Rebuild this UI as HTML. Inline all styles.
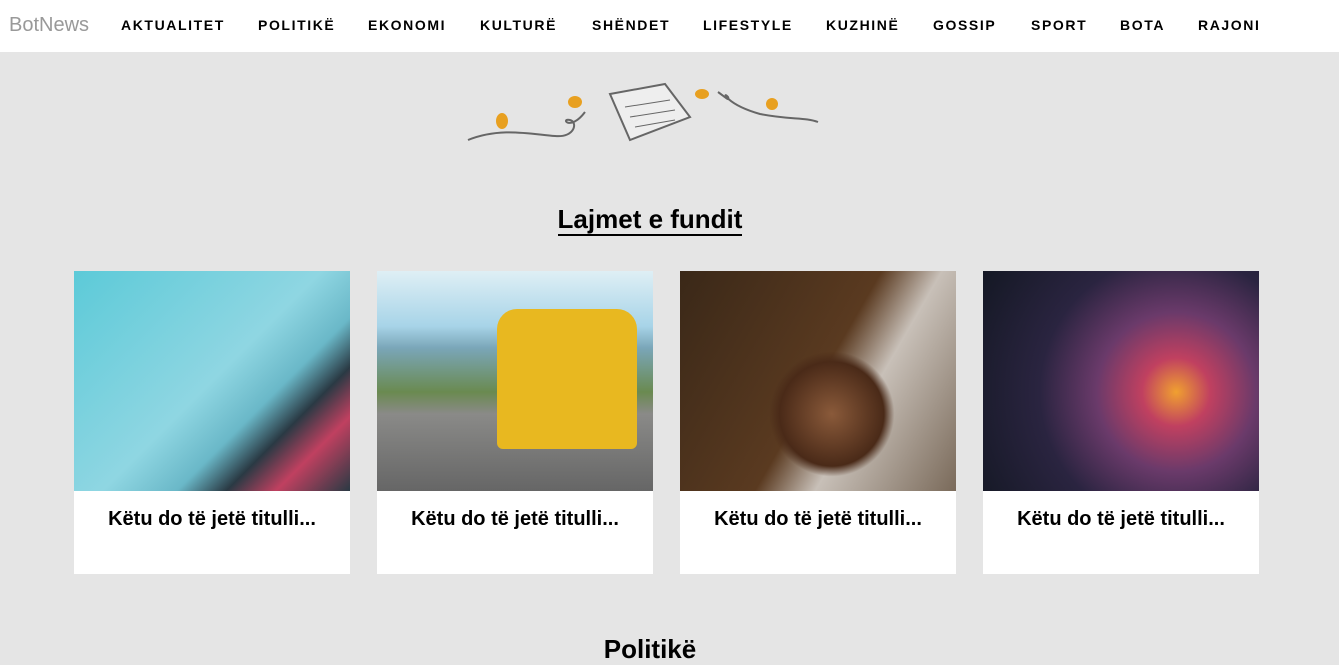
<!DOCTYPE html>
<html><head><meta charset="utf-8"><style>
*{margin:0;padding:0;box-sizing:border-box}
body{width:1339px;height:649px;overflow:hidden;background:#e5e5e5;font-family:"Liberation Sans",Arial,sans-serif;position:relative}
.nav{position:absolute;left:0;top:0;width:1339px;height:52px;background:#fff}
.logo{position:absolute;left:9px;top:14px;font-size:20px;color:#999}
.nav a{position:absolute;top:17px;font-size:14px;font-weight:bold;letter-spacing:1.6px;color:#000;text-decoration:none}
h2{position:absolute;top:204px;left:0;width:1300px;text-align:center;font-size:26px}
h2 span{border-bottom:2px solid #000}
.card{position:absolute;top:271px;width:276px;height:303px;background:#fff}
.img{height:220px}
.card p{text-align:center;font-size:20px;font-weight:bold;margin-top:17px}
</style></head><body>
<div class="nav"><div class="logo">BotNews</div>
<a style="left:121px">AKTUALITET</a><a style="left:258px">POLITIKË</a><a style="left:368px">EKONOMI</a><a style="left:480px">KULTURË</a><a style="left:592px">SHËNDET</a><a style="left:703px">LIFESTYLE</a><a style="left:826px">KUZHINË</a><a style="left:933px">GOSSIP</a><a style="left:1031px">SPORT</a><a style="left:1120px">BOTA</a><a style="left:1198px">RAJONI</a></div>
<svg style="position:absolute;left:460px;top:72px" width="370" height="75" fill="none" stroke="#666" stroke-width="2">
<path d="M8 68 C40 55,70 62,95 64 C115 66,118 50,110 48 C100 46,110 60,125 40"/>
<path d="M258 20 C265 25,270 30,268 25 C262 18,265 32,300 42 C330 48,345 45,358 50"/>
<path d="M150 22 L205 12 L230 45 L170 68 Z" fill="#eee" stroke="#666"/>
<path d="M165 35 L210 28 M170 45 L215 38 M175 55 L215 48" stroke-width="1"/>
<g fill="#e8a020" stroke="none"><ellipse cx="42" cy="49" rx="6" ry="8"/><ellipse cx="115" cy="30" rx="7" ry="6"/><ellipse cx="242" cy="22" rx="7" ry="5"/><ellipse cx="312" cy="32" rx="6" ry="6"/></g>
</svg>
<h2><span>Lajmet e fundit</span></h2>
<div class="card" style="left:74px"><div class="img" style="background:linear-gradient(135deg,#5ccad8 0%,#8fd6e2 50%,#6ab8c8 65%,#2a3a44 75%,#c04060 85%,#2a3a44 100%)"></div><p>Këtu do të jetë titulli...</p></div>
<div class="card" style="left:377px"><div class="img" style="background:linear-gradient(180deg,#dfeff5 0%,#a8d4e8 25%,#7aa6b8 35%,#6a8a50 55%,#8a8a88 65%,#666 100%)"><div style="position:relative;left:120px;top:38px;width:140px;height:140px;background:#e8b820;border-radius:20px 20px 6px 6px"></div></div><p>Këtu do të jetë titulli...</p></div>
<div class="card" style="left:680px"><div class="img" style="background:radial-gradient(circle at 55% 65%,#8a5a3a 0,#4a2a18 25%,transparent 30%),linear-gradient(120deg,#3a2818 0%,#5a3a20 50%,#c8c0b8 65%,#7a6a5a 100%)"></div><p>Këtu do të jetë titulli...</p></div>
<div class="card" style="left:983px"><div class="img" style="background:radial-gradient(circle at 70% 55%,#f0a030 0,#c04060 15%,#6a3a6a 35%,#2a2440 60%,#141824 100%)"></div><p>Këtu do të jetë titulli...</p></div>
<div style="position:absolute;top:634px;left:0;width:1300px;text-align:center;font-size:26px;font-weight:bold">Politikë</div>
</body></html>
